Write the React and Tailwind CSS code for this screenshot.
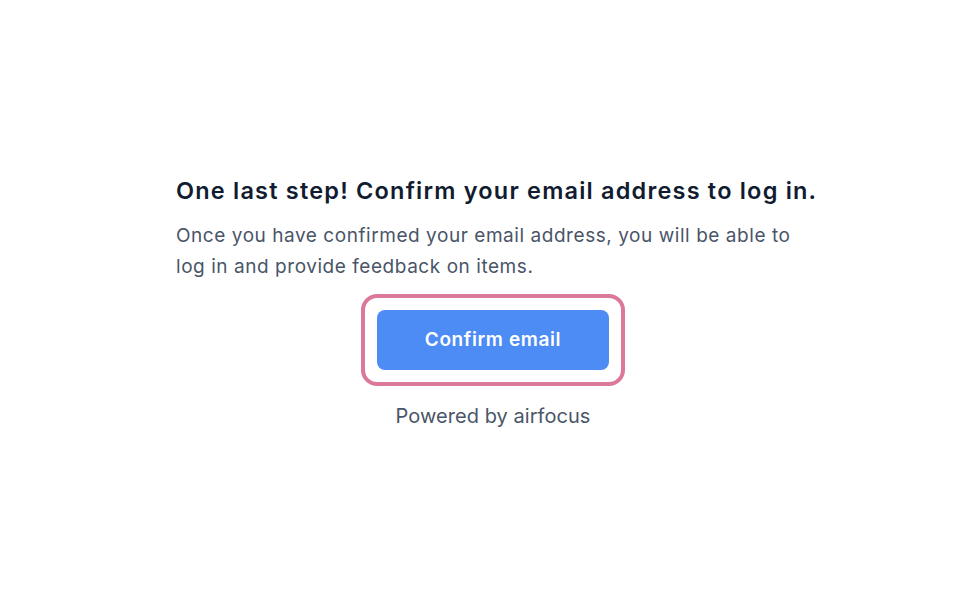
import React from 'react';

const App = () => {
    return (
        <div className="min-h-[598px] w-full bg-white flex justify-center pt-[176px] pl-[10px] font-['Inter',sans-serif]">
            <div className="w-[634px] flex flex-col items-start">
                <h1 className="text-[23.5px] leading-[30px] font-semibold text-[#111c30] tracking-[1.2px] whitespace-nowrap">
                    One last step! Confirm your email address to log in.
                </h1>
                <p className="mt-[14px] text-[19px] leading-[31px] text-[#4a5568] tracking-[0.55px] w-[634px]">
                    Once you have confirmed your email address, you will be able to log in and provide feedback on items.
                </p>
                <div className="self-center mt-[12px] rounded-[16px] border-4 border-[#dc7899] p-3">
                    <button className="w-[232px] h-[60px] rounded-[8px] bg-[#4d8bf5] text-white text-[19px] font-semibold tracking-[0.6px]">
                        Confirm email
                    </button>
                </div>
                <p className="self-center mt-[16px] text-[20px] leading-[28px] text-[#4a5568] tracking-[0.05px]">
                    Powered by airfocus
                </p>
            </div>
        </div>
    );
};

export default App;
